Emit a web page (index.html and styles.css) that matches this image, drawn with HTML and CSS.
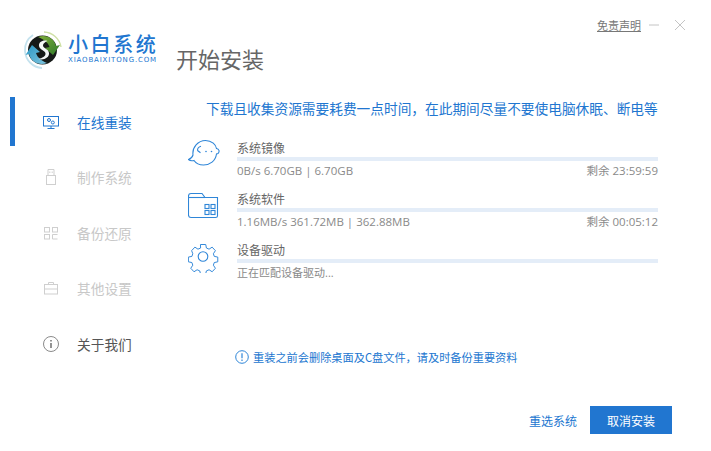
FILE: index.html
```html
<!DOCTYPE html>
<html lang="zh-CN">
<head>
<meta charset="utf-8">
<title>小白系统</title>
<link rel="stylesheet" href="styles.css">
</head>
<body>
<div class="app">
  <aside class="sidebar">
    <div class="brand">
      <svg class="logo" viewBox="0 0 40 40" width="40" height="40">
        <defs>
          <linearGradient id="gr" x1="0" y1="0" x2="1" y2="1"><stop offset="0" stop-color="#7fae3a"/><stop offset="1" stop-color="#2f7a2a"/></linearGradient>
          <linearGradient id="bl" x1="0" y1="0" x2="1" y2="1"><stop offset="0" stop-color="#2a97c4"/><stop offset="1" stop-color="#7fc5df"/></linearGradient>
        </defs>
        <path d="M21 2A18 18 0 0 1 38 17" fill="none" stroke="#cfe0a6" stroke-width="1.4"/>
        <path d="M19 38A18 18 0 0 1 2 21 18 18 0 0 1 10 5" fill="none" stroke="#c4e2ee" stroke-width="1.8"/>
        <circle cx="19.5" cy="20" r="14.5" fill="#161a18"/>
        <path d="M15 7C23 4 31 8 33 16L37 15 30 25 22 18 26.500 17C25 12 20 9 15 7Z" fill="url(#gr)"/>
        <path d="M24 33C16 36 8 32 6 24L2.500 25 9 15 17 22 13 23C14.500 28 19 31 24 33Z" fill="url(#bl)"/>
        <path d="M24.500 11C20 9.500 15.500 12 16 16C16.500 20 22 20 22.500 23.500C22.800 26.500 19 28 15.500 29C21 30.500 26.500 27.500 26 23C25.500 18.500 20 18.500 20 15.500C20 13.500 22 12 24.500 11Z" fill="#f4f7f6"/>
      </svg>
      <div class="brand-text">
        <div class="brand-name">小白系统</div>
        <div class="brand-url">XIAOBAIXITONG.COM</div>
      </div>
    </div>
    <nav class="nav">
      <div class="nav-item active">
        <svg class="nav-icon" viewBox="0 0 16 16" width="16" height="16" fill="none" stroke="#2176d0"><rect x=".5" y="2.500" width="15" height="9.500"/><path d="M8 12v2.500M4.500 14.500h7"/><circle cx="6" cy="6" r="1.500"/><circle cx="9.800" cy="8.500" r="1.500"/></svg>
        <span>在线重装</span>
      </div>
      <div class="nav-item disabled">
        <svg class="nav-icon" viewBox="0 0 16 16" width="16" height="16" fill="none" stroke="#cfcfcf"><rect x="3.500" y="6.500" width="9" height="9"/><path d="M5 6.500V.5h6v6M6.800 2.500v1.500M9.200 2.500v1.500"/></svg>
        <span>制作系统</span>
      </div>
      <div class="nav-item disabled">
        <svg class="nav-icon" viewBox="0 0 16 16" width="16" height="16" fill="none" stroke="#cfcfcf"><rect x="1.500" y="2.500" width="5" height="4.500"/><rect x="1.500" y="9.500" width="5" height="4.500"/><rect x="9.500" y="2.500" width="5" height="4.500"/><path d="M14.500 9.500h-5v4.500h5"/></svg>
        <span>备份还原</span>
      </div>
      <div class="nav-item disabled">
        <svg class="nav-icon" viewBox="0 0 16 16" width="16" height="16" fill="none" stroke="#cfcfcf"><rect x="1.500" y="4.500" width="13" height="9.500"/><path d="M5.500 4.500V2.500h5v2M1.500 9h13"/></svg>
        <span>其他设置</span>
      </div>
      <div class="nav-item">
        <svg class="nav-icon" viewBox="0 0 16 16" width="16" height="16" fill="none" stroke="#8a8a8a"><circle cx="8" cy="8" r="7.500"/><path d="M8 7v5" stroke="#666" stroke-width="1.400"/><path d="M8 4v1.500" stroke="#666" stroke-width="1.400"/></svg>
        <span>关于我们</span>
      </div>
    </nav>
  </aside>
  <main class="main">
    <div class="topbar">
      <a class="disclaimer">免责声明</a>
      <svg class="win-btn" viewBox="0 0 10 10" width="10" height="10"><path d="M0 5h10" stroke="#c4c4c4"/></svg>
      <svg class="win-btn close" viewBox="0 0 10 10" width="10" height="10"><path d="M0 0l10 10M10 0L0 10" stroke="#c4c4c4"/></svg>
    </div>
    <h1 class="title">开始安装</h1>
    <p class="notice">下载且收集资源需要耗费一点时间，在此期间尽量不要使电脑休眠、断电等</p>
    <div class="tasks">
      <div class="task">
        <svg class="task-icon" viewBox="0 0 32 32" width="32" height="32" fill="none" stroke="#2f86d8" stroke-width="1.100">
          <path d="M5 16C4 8.500 10 1.500 17.500 1.500C24 1.500 28 6 28.500 9.500C31 10 32 12.500 30 14.500L28.500 15C27.500 22 22 26 15.500 26C11.500 26 8 24.500 6 21.500C4 22 1.500 21.500 .5 20.500C3 19.500 4.500 18 5 16Z"/>
          <path d="M9.500 11.500C9.500 9 11 7.800 13 7.300M9.500 11.500L12.500 13.800"/>
          <circle cx="18" cy="12.500" r=".8" fill="#2f86d8" stroke="none"/><circle cx="23.500" cy="12.500" r=".8" fill="#2f86d8" stroke="none"/>
        </svg>
        <div class="task-body">
          <div class="task-name">系统镜像</div>
          <div class="bar"></div>
          <div class="task-info"><span>0B/s 6.70GB | 6.70GB</span><span>剩余 23:59:59</span></div>
        </div>
      </div>
      <div class="task">
        <svg class="task-icon" viewBox="0 0 32 32" width="32" height="32" fill="none" stroke="#2f86d8" stroke-width="1.100">
          <path d="M.5 25V6C.5 4.500 1.500 3.500 3 3.500H14L17 7.500H29.500V26C29.500 27 28.500 27.500 27.500 27.500H3C1.500 27.500 .5 27 .5 25Z"/>
          <path d="M17 7.500H.5"/>
          <rect x="17" y="14.500" width="4" height="4"/><rect x="23" y="14.500" width="4" height="4"/><rect x="17" y="20.500" width="4" height="4"/><rect x="23" y="20.500" width="4" height="4"/>
        </svg>
        <div class="task-body">
          <div class="task-name">系统软件</div>
          <div class="bar"></div>
          <div class="task-info"><span>1.16MB/s 361.72MB | 362.88MB</span><span>剩余 00:05:12</span></div>
        </div>
      </div>
      <div class="task">
        <svg class="task-icon" viewBox="0 0 32 32" width="32" height="32" fill="none" stroke="#2f86d8" stroke-width="1.100">
          <path d="M13 2.500h6l.8 4 3 1.300 3.500-2.300 3.700 4-2.300 3.500 1 3 4 .8v5.400l-4 .8-1 3 2.300 3.500-3.700 4-3.500-2.300-3 1.300-.8 3h-6l-.8-3-3-1.300-3.500 2.300-3.700-4 2.300-3.500-1-3-4-.8v-5.400l4-.8 1-3L3 9.500l3.700-4 3.500 2.300 3-1.300z" transform="translate(1 1.300) scale(.88)"/>
          <circle cx="15" cy="15.500" r="4.800"/>
        </svg>
        <div class="task-body">
          <div class="task-name">设备驱动</div>
          <div class="bar"></div>
          <div class="task-info status"><span>正在匹配设备驱动...</span></div>
        </div>
      </div>
    </div>
    <div class="warning">
      <svg viewBox="0 0 14 14" width="14" height="14" fill="none" stroke="#2f86d8"><circle cx="7" cy="7" r="6.300"/><path d="M7 3.200v5M7 9.500v1.400" stroke-width="1.200"/></svg>
      <span>重装之前会删除桌面及C盘文件，请及时备份重要资料</span>
    </div>
    <div class="actions">
      <a class="link-btn">重选系统</a>
      <button class="primary-btn">取消安装</button>
    </div>
  </main>
</div>
</body>
</html>
```
FILE: styles.css
```css
* { box-sizing: border-box; }
html, body { margin: 0; padding: 0; background: #fff; }
body { font-family: "Noto Sans CJK SC", "Open Sans", sans-serif; color: #666; }
.app { display: flex; width: 711px; height: 451px; overflow: hidden; background: #fff; }
.sidebar { width: 176px; flex: none; padding-top: 30px; }
.brand { display: flex; align-items: flex-start; height: 67px; padding-left: 23px; }
.logo { flex: none; }
.brand-text { margin-left: 5px; width: 92px; padding-top: 2px; }
.brand-name { height: 24px; font-size: 20px; line-height: 24px; font-weight: 500; color: #2176d0; letter-spacing: 2.600px; white-space: nowrap; }
.brand-url { font-family: "DejaVu Sans", sans-serif; font-size: 7px; line-height: 9px; color: #2176d0; letter-spacing: .84px; white-space: nowrap; }
.nav { padding-left: 10px; }
.nav-item { display: flex; align-items: center; height: 49px; margin-bottom: 6.5px; padding-left: 28px; border-left: 5px solid transparent; font-size: 13.700px; color: #555; }
.nav-item span { margin-left: 18px; }
.nav-icon { flex: none; }
.nav-item.active { border-left-color: #2176d0; color: #2176d0; }
.nav-item.disabled { color: #c8c8c8; }
.main { flex: 1; min-width: 0; padding-right: 39px; display: flex; flex-direction: column; }
.topbar { display: flex; align-items: center; justify-content: flex-end; height: 16px; margin-top: 17px; margin-right: -13px; }
.disclaimer { font-size: 11px; line-height: 14px; color: #777; text-decoration: underline; }
.win-btn { flex: none; margin-left: 8px; }
.win-btn.close { margin-left: 16px; }
.title { margin: 8px 0 0; font-size: 22px; line-height: 34px; font-weight: 400; color: #666; }
.notice { margin: 23px 0 0 30px; font-size: 13.700px; line-height: 20px; color: #2176d0; white-space: nowrap; }
.tasks { margin: 21px 14px 0 0; }
.task { display: flex; height: 42px; margin-bottom: 9px; }
.task-icon { flex: none; margin: 0 17px 0 12px; }
.task-body { flex: 1; min-width: 0; }
.task-name { font-size: 12px; line-height: 18px; color: #666; }
.bar { height: 4px; background: #e4edf8; }
.task-info { display: flex; justify-content: space-between; font-family: "Open Sans", "Noto Sans CJK SC", sans-serif; font-size: 11.500px; line-height: 20px; color: #8a8a8a; }
.task-info.status { font-size: 11px; }
.warning { display: flex; align-items: center; gap: 4px; margin: 57px 0 0 59px; height: 16px; font-size: 11.200px; color: #2176d0; white-space: nowrap; }
.actions { display: flex; align-items: center; justify-content: flex-end; margin-top: 41px; }
.link-btn { font-size: 12px; color: #2176d0; margin-right: 13px; }
.primary-btn { width: 82px; height: 28px; border: 0; padding: 0; background: #2176d0; color: #fff; font: inherit; font-size: 12px; }
```
